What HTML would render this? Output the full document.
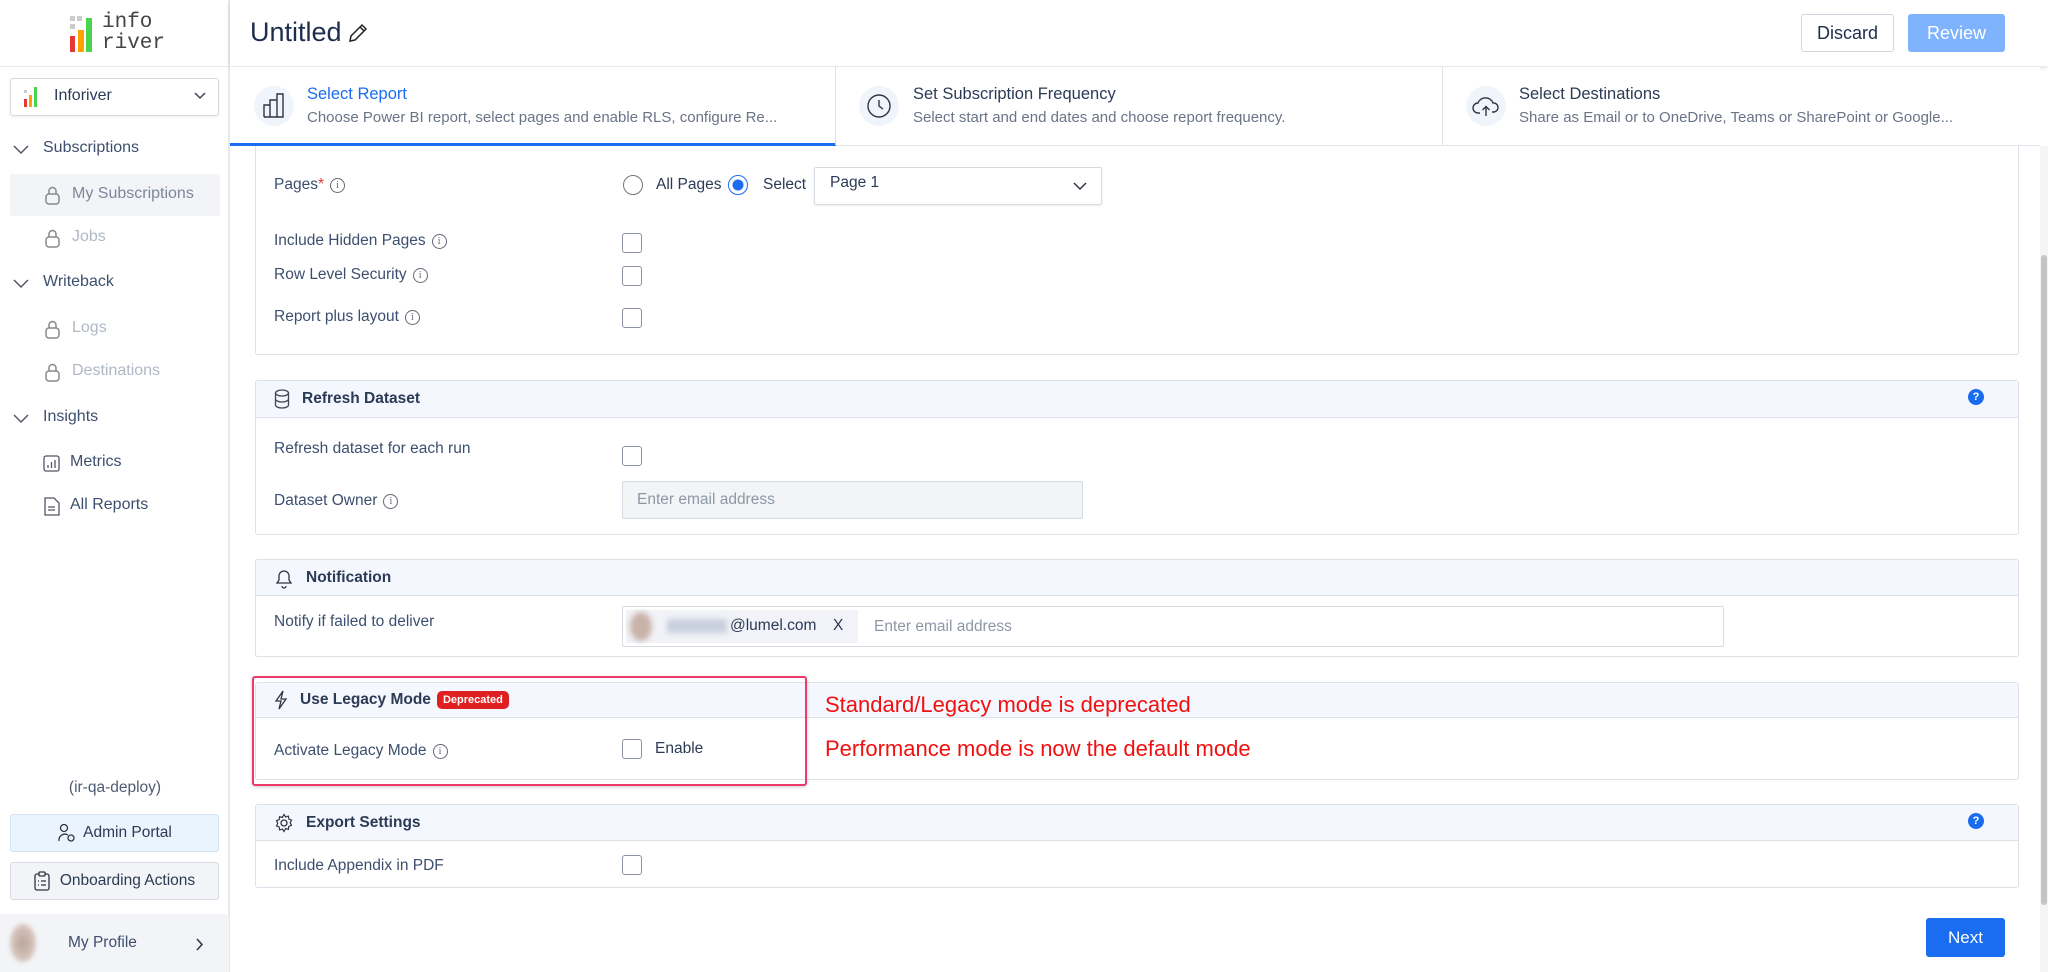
<!DOCTYPE html>
<html><head><meta charset="utf-8"><style>
*{box-sizing:border-box;margin:0;padding:0}
body{width:2048px;height:972px;overflow:hidden;background:#fff;font-family:"Liberation Sans",sans-serif;color:#2b3a55;position:relative;font-size:16px}
.a{position:absolute}
.side{left:0;top:0;width:230px;height:972px;background:#fff;border-right:2px solid #e6e9ef}
.card{border:1px solid #dde2ea;border-radius:3px;background:#fff}
.hd{background:#f4f7fd;border-bottom:1px solid #dde2ea;display:flex;align-items:center;padding-left:18px;gap:12px;font-size:15.5px;color:#2b3a55;font-weight:bold}
.lbl{font-size:15.5px;color:#3d4f6e;display:flex;align-items:center;gap:6px}
.info{display:inline-block;width:15px;height:15px;border:1.3px solid #667;border-radius:50%;font-size:10px;line-height:13px;text-align:center;color:#667;font-family:"Liberation Serif",serif}
.cb{width:20px;height:20px;border:1.5px solid #8a93a3;border-radius:3px;background:#fff}
.help{width:16px;height:16px;border-radius:50%;background:#1a6df0;color:#fff;font-size:11px;font-weight:bold;text-align:center;line-height:16px}
</style></head><body>
<!-- sidebar -->
<div class="a side"></div>
<div class="a" style="left:0;top:66px;width:230px;height:1px;background:#e6e9ef"></div>
<svg class="a" style="left:70px;top:16px" width="30" height="36" viewBox="0 0 30 36">
<rect x="0" y="0" width="5" height="5" fill="#ccc"/><rect x="7" y="0" width="5" height="5" fill="#ccc"/>
<rect x="0" y="8" width="5" height="5" fill="#ccc"/><rect x="0" y="20" width="5" height="16" fill="#e53935"/>
<rect x="8" y="14" width="6" height="22" fill="#ffa000"/><rect x="16" y="2" width="6" height="34" fill="#4cd34c"/></svg>
<div class="a" style="left:102px;top:12px;font-family:'Liberation Mono',monospace;font-size:21px;line-height:21px;color:#444">info<br>river</div>
<div class="a" style="left:10px;top:78px;width:209px;height:38px;border:1px solid #d6dbe3;border-radius:3px;box-shadow:0 1px 2px rgba(0,0,0,.08)"></div>
<svg class="a" style="left:24px;top:87px" width="14" height="20"><rect x="0" y="12" width="3" height="8" fill="#e53935"/><rect x="5" y="8" width="3" height="12" fill="#ffa000"/><rect x="10" y="0" width="3" height="20" fill="#4cd34c"/><rect x="0" y="3" width="3" height="3" fill="#ccc"/></svg>
<div class="a" style="left:54px;top:87px;font-size:16px;color:#2b3a55">Inforiver</div>
<svg class="a" style="left:194px;top:92px" width="12" height="8"><path d="M1 1l5 5 5-5" stroke="#445" stroke-width="1.5" fill="none"/></svg>
<svg width="0" height="0"><defs>
<g id="chev"><path d="M1 1l7 7 7-7" stroke="#556" stroke-width="1.5" fill="none"/></g>
<g id="lock"><rect x="1" y="8" width="13" height="10" rx="3" stroke="#888" stroke-width="1.5" fill="none"/><path d="M4 8V5a3.5 3.5 0 017 0v3" stroke="#888" stroke-width="1.5" fill="none"/></g>
</defs></svg>
<svg class="a" style="left:13px;top:145px" width="17" height="10"><use href="#chev"/></svg>
<div class="a" style="left:43px;top:139px;font-size:16px;color:#3d4f6e">Subscriptions</div>
<div class="a" style="left:10px;top:174px;width:210px;height:42px;background:#f3f4f7;border-radius:2px"></div>
<svg class="a" style="left:45px;top:186px" width="16" height="19"><use href="#lock"/></svg>
<div class="a" style="left:72px;top:185px;color:#7d879a">My Subscriptions</div>
<svg class="a" style="left:45px;top:229px" width="16" height="19"><use href="#lock"/></svg>
<div class="a" style="left:72px;top:228px;color:#b0b8c6">Jobs</div>
<svg class="a" style="left:13px;top:279px" width="17" height="10"><use href="#chev"/></svg>
<div class="a" style="left:43px;top:273px;color:#3d4f6e">Writeback</div>
<svg class="a" style="left:45px;top:320px" width="16" height="19"><use href="#lock"/></svg>
<div class="a" style="left:72px;top:319px;color:#b0b8c6">Logs</div>
<svg class="a" style="left:45px;top:363px" width="16" height="19"><use href="#lock"/></svg>
<div class="a" style="left:72px;top:362px;color:#b0b8c6">Destinations</div>
<svg class="a" style="left:13px;top:414px" width="17" height="10"><use href="#chev"/></svg>
<div class="a" style="left:43px;top:408px;color:#3d4f6e">Insights</div>
<svg class="a" style="left:43px;top:455px" width="18" height="18"><rect x="1" y="1" width="15" height="15" rx="2" stroke="#556" stroke-width="1.3" fill="none"/><path d="M5 13v-3M8.5 13V7M12 13V5" stroke="#556" stroke-width="1.3"/></svg>
<div class="a" style="left:70px;top:453px;color:#3d4f6e">Metrics</div>
<svg class="a" style="left:44px;top:497px" width="16" height="19"><path d="M1 1h9l5 5v12H1z" stroke="#556" stroke-width="1.3" fill="none"/><path d="M4 10h7M4 13h7" stroke="#556" stroke-width="1.2"/></svg>
<div class="a" style="left:70px;top:496px;color:#3d4f6e">All Reports</div>
<div class="a" style="left:0;width:230px;top:779px;text-align:center;color:#4d5b73;font-size:15.5px">(ir-qa-deploy)</div>
<div class="a" style="left:10px;top:814px;width:209px;height:38px;background:#eaf4fd;border:1px solid #d3e5f7;border-radius:3px;display:flex;align-items:center;justify-content:center;gap:6px;font-size:15.5px;color:#2b3a55">
<svg width="20" height="20"><circle cx="7" cy="5" r="3.5" stroke="#334" stroke-width="1.3" fill="none"/><path d="M2 18a6 6 0 019-6" stroke="#334" stroke-width="1.3" fill="none"/><circle cx="14" cy="15" r="3" stroke="#334" stroke-width="1.3" fill="none"/></svg>Admin Portal</div>
<div class="a" style="left:10px;top:862px;width:209px;height:38px;background:#f3f4f7;border:1px solid #d6dbe3;border-radius:3px;display:flex;align-items:center;justify-content:center;gap:10px;font-size:15.5px;color:#2b3a55">
<svg width="16" height="20"><rect x="1" y="3" width="14" height="16" rx="2" stroke="#334" stroke-width="1.3" fill="none"/><rect x="5" y="1" width="6" height="4" rx="1" stroke="#334" stroke-width="1.3" fill="#f3f4f7"/><path d="M4 10h1M7 10h5M4 14h1M7 14h5" stroke="#334" stroke-width="1.2"/></svg>Onboarding Actions</div>
<div class="a" style="left:0;top:914px;width:229px;height:58px;background:#f3f4f7"></div>
<div class="a" style="left:10px;top:924px;width:26px;height:38px;border-radius:50%;background:radial-gradient(#b9a49a,#e8d8d3);filter:blur(2px)"></div>
<div class="a" style="left:68px;top:934px;color:#3d4f6e;font-size:15.5px">My Profile</div>
<svg class="a" style="left:196px;top:938px" width="8" height="13"><path d="M1 1l5 5.5L1 12" stroke="#334" stroke-width="1.5" fill="none"/></svg>

<!-- card 1 (behind tabs) -->
<div class="a card" style="left:255px;top:130px;width:1764px;height:225px;border-top:none"></div>

<!-- header -->
<div class="a" style="left:230px;top:0;width:1818px;height:66px;background:#fff;box-shadow:0 2px 4px rgba(0,0,0,.12)"></div>
<div class="a" style="left:250px;top:17px;font-size:27px;color:#1f2d4d">Untitled</div>
<svg class="a" style="left:347px;top:22px" width="22" height="22"><path d="M3 19l1-5L15 3l4 4L8 18z M13 5l4 4" stroke="#222" stroke-width="1.5" fill="none"/></svg>
<div class="a" style="left:1801px;top:14px;width:93px;height:38px;border:1px solid #cfd5de;border-radius:3px;text-align:center;line-height:36px;font-size:18px;color:#1f2d4d">Discard</div>
<div class="a" style="left:1908px;top:14px;width:97px;height:38px;background:#80b3fd;border-radius:3px;text-align:center;line-height:38px;font-size:18px;color:#fff">Review</div>

<!-- tabs -->
<div class="a" style="left:230px;top:67px;width:1810px;height:79px;border-bottom:1px solid #e2e6ec;background:#fff"></div>
<div class="a" style="left:230px;top:143px;width:606px;height:3px;background:#1a6df0"></div>
<div class="a" style="left:835px;top:67px;width:1px;height:78px;background:#dde2ea"></div>
<div class="a" style="left:1442px;top:67px;width:1px;height:78px;background:#dde2ea"></div>
<div class="a" style="left:254px;top:86px;width:40px;height:40px;border-radius:50%;background:#f0f4fb"></div>
<svg class="a" style="left:262px;top:92px" width="24" height="27"><path d="M2 25V13h6V25M8 25V8h7v17M15 25V2h6v23H2" stroke="#334" stroke-width="1.4" fill="none"/></svg>
<div class="a" style="left:307px;top:85px;font-size:16.5px;color:#1a6df0">Select Report</div>
<div class="a" style="left:307px;top:109px;font-size:15px;color:#6a7487">Choose Power BI report, select pages and enable RLS, configure Re...</div>
<div class="a" style="left:859px;top:86px;width:40px;height:40px;border-radius:50%;background:#f0f4fb"></div>
<svg class="a" style="left:866px;top:93px" width="26" height="26"><circle cx="13" cy="13" r="11" stroke="#334" stroke-width="1.4" fill="none"/><path d="M13 7v6l4 3" stroke="#334" stroke-width="1.4" fill="none"/></svg>
<div class="a" style="left:913px;top:85px;font-size:16.5px;color:#2b3a55">Set Subscription Frequency</div>
<div class="a" style="left:913px;top:109px;font-size:15px;color:#6a7487">Select start and end dates and choose report frequency.</div>
<div class="a" style="left:1466px;top:86px;width:40px;height:40px;border-radius:50%;background:#f0f4fb"></div>
<svg class="a" style="left:1472px;top:94px" width="28" height="24"><path d="M8 19H6a5 5 0 010-10 8 8 0 0115 0 4.5 4.5 0 011 9h-2" stroke="#334" stroke-width="1.4" fill="none"/><path d="M14 22v-9M10.5 16l3.5-3.5 3.5 3.5" stroke="#334" stroke-width="1.4" fill="none"/></svg>
<div class="a" style="left:1519px;top:85px;font-size:16.5px;color:#2b3a55">Select Destinations</div>
<div class="a" style="left:1519px;top:109px;font-size:15px;color:#6a7487">Share as Email or to OneDrive, Teams or SharePoint or Google...</div>

<!-- scrollbar -->
<div class="a" style="left:2040px;top:146px;width:8px;height:826px;background:#f5f5f5"></div>
<div class="a" style="left:2041px;top:255px;width:6px;height:650px;background:#c4c4c4;border-radius:3px"></div>

<!-- card 1 content -->
<div class="a lbl" style="left:274px;top:176px">Pages<span style="color:#e53935;margin-left:-6px">*</span><span class="info">i</span></div>
<div class="a" style="left:623px;top:175px;width:20px;height:20px;border:1.5px solid #777;border-radius:50%"></div>
<div class="a lbl" style="left:656px;top:176px;color:#2b3a55">All Pages</div>
<div class="a" style="left:728px;top:175px;width:20px;height:20px;border:1.5px solid #1a6df0;border-radius:50%;background:radial-gradient(#1a6df0 5px,#fff 6px)"></div>
<div class="a lbl" style="left:763px;top:176px;color:#2b3a55">Select</div>
<div class="a" style="left:814px;top:167px;width:288px;height:38px;border:1px solid #d6dbe3;border-radius:2px;box-shadow:0 1px 2px rgba(0,0,0,.08)"></div>
<div class="a" style="left:830px;top:174px;font-size:15.5px;color:#2b3a55">Page 1</div>
<svg class="a" style="left:1073px;top:182px" width="14" height="9"><path d="M1 1l6 6 6-6" stroke="#334" stroke-width="1.5" fill="none"/></svg>
<div class="a lbl" style="left:274px;top:232px">Include Hidden Pages <span class="info">i</span></div>
<div class="a cb" style="left:622px;top:233px"></div>
<div class="a lbl" style="left:274px;top:266px">Row Level Security <span class="info">i</span></div>
<div class="a cb" style="left:622px;top:266px"></div>
<div class="a lbl" style="left:274px;top:308px">Report plus layout <span class="info">i</span></div>
<div class="a cb" style="left:622px;top:308px"></div>

<!-- refresh dataset -->
<div class="a card" style="left:255px;top:380px;width:1764px;height:155px"></div>
<div class="a hd" style="left:256px;top:381px;width:1762px;height:37px"><svg width="16" height="20"><ellipse cx="8" cy="4" rx="6.5" ry="3" stroke="#445" stroke-width="1.3" fill="none"/><path d="M1.5 4v12c0 1.7 3 3 6.5 3s6.5-1.3 6.5-3V4M1.5 10c0 1.7 3 3 6.5 3s6.5-1.3 6.5-3" stroke="#445" stroke-width="1.3" fill="none"/></svg>Refresh Dataset</div>
<div class="a help" style="left:1968px;top:389px">?</div>
<div class="a lbl" style="left:274px;top:440px">Refresh dataset for each run</div>
<div class="a cb" style="left:622px;top:446px"></div>
<div class="a lbl" style="left:274px;top:492px">Dataset Owner <span class="info">i</span></div>
<div class="a" style="left:622px;top:481px;width:461px;height:38px;background:#f3f4f6;border:1px solid #d6dbe3;border-radius:2px;padding-left:14px;line-height:36px;font-size:15.5px;color:#8e97a6">Enter email address</div>

<!-- notification -->
<div class="a card" style="left:255px;top:559px;width:1764px;height:98px"></div>
<div class="a hd" style="left:256px;top:560px;width:1762px;height:36px"><svg width="20" height="22"><path d="M3 16h14l-2-3V9a5 5 0 00-10 0v4z" stroke="#334" stroke-width="1.3" fill="none"/><path d="M8 19a2 2 0 004 0" stroke="#334" stroke-width="1.3" fill="none"/></svg>Notification</div>
<div class="a lbl" style="left:274px;top:613px">Notify if failed to deliver</div>
<div class="a" style="left:622px;top:606px;width:1102px;height:41px;border:1px solid #d6dbe3;border-radius:2px"></div>
<div class="a" style="left:626px;top:610px;width:232px;height:33px;background:#f1f3f8"></div>
<div class="a" style="left:630px;top:612px;width:22px;height:29px;border-radius:50%;background:#c9b2a8;filter:blur(3px)"></div>
<div class="a" style="left:667px;top:619px;width:60px;height:14px;background:#c8cfdc;filter:blur(3px)"></div>
<div class="a" style="left:730px;top:617px;font-size:15.5px;color:#2b3a55">@lumel.com</div>
<div class="a" style="left:833px;top:617px;font-size:15.5px;color:#2b3a55">X</div>
<div class="a" style="left:874px;top:618px;font-size:15.5px;color:#8e97a6">Enter email address</div>

<!-- legacy -->
<div class="a card" style="left:255px;top:682px;width:1764px;height:98px"></div>
<div class="a hd" style="left:256px;top:683px;width:1762px;height:35px"><svg width="14" height="20"><path d="M9 1L2 11h5l-2 8 7-10H7z" stroke="#334" stroke-width="1.3" fill="none"/></svg>Use Legacy Mode<span style="margin-left:-6px;background:#e02020;color:#fff;font-size:11px;padding:3px 6px;border-radius:5px">Deprecated</span></div>
<div class="a lbl" style="left:274px;top:742px">Activate Legacy Mode <span class="info">i</span></div>
<div class="a cb" style="left:622px;top:739px"></div>
<div class="a lbl" style="left:655px;top:740px;color:#2b3a55">Enable</div>
<div class="a" style="left:252px;top:676px;width:555px;height:110px;border:2px solid #ec3b6a;border-radius:3px;box-shadow:0 1px 3px rgba(0,0,0,.2)"></div>
<div class="a" style="left:825px;top:692px;font-size:22px;color:#f01010">Standard/Legacy mode is deprecated</div>
<div class="a" style="left:825px;top:736px;font-size:22px;color:#f01010">Performance mode is now the default mode</div>

<!-- export -->
<div class="a card" style="left:255px;top:804px;width:1764px;height:84px"></div>
<div class="a hd" style="left:256px;top:805px;width:1762px;height:36px"><svg width="20" height="20"><circle cx="10" cy="10" r="3" stroke="#334" stroke-width="1.3" fill="none"/><path d="M10 1.5l1.6 2.4 2.8-.8.4 2.9 2.7 1.1-1.3 2.6 1.3 2.6-2.7 1.1-.4 2.9-2.8-.8L10 18.5l-1.6-2.4-2.8.8-.4-2.9-2.7-1.1 1.3-2.6-1.3-2.6 2.7-1.1.4-2.9 2.8.8z" stroke="#334" stroke-width="1.2" fill="none"/></svg>Export Settings</div>
<div class="a help" style="left:1968px;top:813px">?</div>
<div class="a lbl" style="left:274px;top:857px">Include Appendix in PDF</div>
<div class="a cb" style="left:622px;top:855px"></div>

<div class="a" style="left:1926px;top:918px;width:79px;height:39px;background:#1a6df0;border-radius:3px;color:#fff;text-align:center;line-height:39px;font-size:17px">Next</div>
</body></html>
